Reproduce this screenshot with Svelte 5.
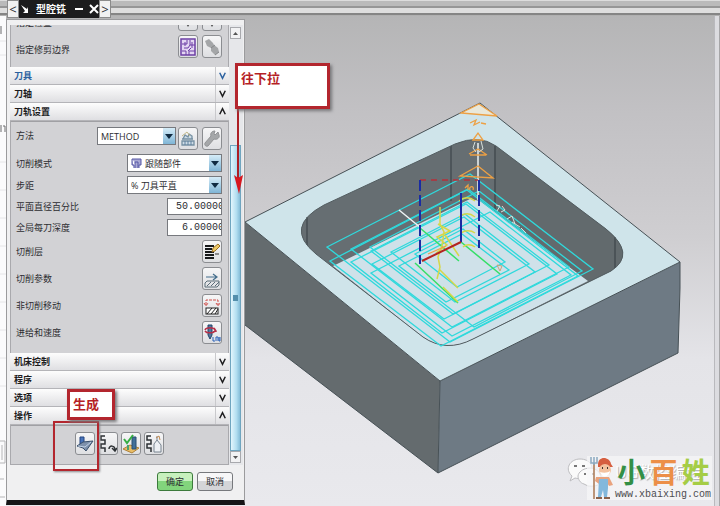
<script lang="ts">
	let metodo = 'METHOD';
	let modo = '跟随部件';
	let paso = '% 刀具平直';
	let porcentaje = '50.00000';
	let profundidad = '6.00000';

	const secciones = ['机床控制', '程序', '选项'];

	const filas = [
		{ texto: '切削层', icono: 'capas' },
		{ texto: '切削参数', icono: 'parametros' },
		{ texto: '非切削移动', icono: 'movimiento' },
		{ texto: '进给和速度', icono: 'velocidad' }
	];

	const acciones = [
		{ texto: '生成', icono: 'generar' },
		{ texto: '重播', icono: 'repetir' },
		{ texto: '确认', icono: 'verificar' },
		{ texto: '列表', icono: 'lista' }
	];

	// u0, v0, u1, v1 on the pocket floor, and the depth of the pass
	const pasadas = [
		[0, 0, 1, 1, 0],
		[0.09, 0.09, 0.91, 0.91, 0],
		[0.165, 0.165, 0.835, 0.835, 0],
		[0.24, 0.24, 0.76, 0.76, 0],
		[0.33, 0.33, 0.67, 0.67, 0],
		[0.02, 0, 0.98, 0.9, 15],
		[0.1, 0.08, 0.9, 0.82, 15],
		[0.18, 0.16, 0.82, 0.74, 15],
		[0.28, 0.26, 0.72, 0.64, 15],
		[0.2, 0.12, 0.96, 0.96, 3],
		[0.05, 0.3, 0.88, 0.96, 1]
	];

	function proyectar(u: number, v: number, z: number) {
		return `${Math.round(327 + u * 143 + v * 123)},${Math.round(247 - u * 73 + v * 95 + z)}`;
	}

	const trayectorias = pasadas.map(([u0, v0, u1, v1, z]) =>
		[proyectar(u0, v0, z), proyectar(u1, v0, z), proyectar(u1, v1, z), proyectar(u0, v1, z)].join(' ')
	);
</script>

{#snippet icono(nombre: string)}
	<svg width="18" height="20" viewBox="0 0 18 20" fill="none" aria-hidden="true">
		{#if nombre === 'borde'}
			<rect x="2" y="2" width="14" height="16" fill="#e3d6f2" stroke="#6c3fa5" stroke-width="1.5" />
			<path d="M3 7h5V3M11 3v5h5M3 14h4v4M10 18v-4h6M5 11h4l2-3M12 11l-3 3M6 5v4M13 5v6" stroke="#6c3fa5" />
		{:else if nombre === 'linterna'}
			<path d="M2 4l4-2 4 4 1 2 4 3 1 4-4 3-4-4v-3L4 9z" fill="#a4a6a8" />
			<path d="M8 11l4-3M12 18l4-3" stroke="#858789" />
		{:else if nombre === 'punto'}
			<path d="M6 12h6l-3 5z" fill="#555" />
		{:else if nombre === 'metodo'}
			<path d="M3 16h12v-4H3zM3 10h11M4 10l2-4 3 2 1-3 3 2v3" fill="#cddbe5" stroke="#7590a2" stroke-width="1.3" />
			<path d="M6 12v4M9 12v4M12 12v4" stroke="#6182a0" />
			<path d="M3 7l5-4 3 4" stroke="#c3b888" />
		{:else if nombre === 'llave'}
			<path d="M15 3l-3 3-1-1 1-3c-3 0-5 2-4 5l-6 7c-1 2 1 4 3 3l6-7c3 1 6-1 5-4z" fill="#a5a7a9" stroke="#929496" />
		{:else if nombre === 'capas'}
			<path d="M2 4h9M2 7h7M2 10h9M2 13h9M2 16h9" stroke="#17191b" stroke-width="2" />
			<path d="M9 10l1-4 5-4 2 2-5 5z" fill="#edca68" stroke="#9c7024" />
			<path d="M12 12h4" stroke="#333" />
		{:else if nombre === 'parametros'}
			<path d="M3 8h10M10 5l4 3-4 3" stroke="#456f8d" stroke-width="1.2" />
			<path d="M2 18v-4l2-2h12v4l-2 2zM4 17l4-4M8 17l4-4M12 17l4-4" stroke="#5c6e79" />
		{:else if nombre === 'movimiento'}
			<path d="M3 9V4h12v5M1 7l2 3 2-3M13 7l2 3 2-3" stroke="#d0504d" stroke-dasharray="3 1" />
			<rect x="3" y="12" width="12" height="6" fill="#fff" stroke="#222" />
			<path d="M4 18l5-6M8 18l5-6M12 18l3-5" stroke="#222" />
		{:else if nombre === 'velocidad'}
			<path d="M5 2h4v10l-2 4-2-4z" fill="#53769c" stroke="#234468" />
			<path d="M2 7c1-3 9-3 10 0s-8 4-10 1M11 5l2 3-3 1" stroke="#b63048" stroke-width="1.5" />
			<path d="M10 14v4h2M13 18v-4h2v4M16 14v4h1v-4" stroke="#2961b8" />
		{:else if nombre === 'generar'}
			<path d="M4 3h4v9H4z" fill="#4974ba" stroke="#244580" />
			<path d="M1 12l6-4 10-1-7 10-3-3z" fill="#7e91ac" stroke="#3b506b" />
			<path d="M2 12l7 1 6-5" stroke="#c0d0e4" />
		{:else if nombre === 'repetir'}
			<path d="M6 2H2v4h4v4H2v4h4v4M10 15c0-4 6-4 6 1M13 14l3 3 2-3" stroke="#2d3134" stroke-width="1.5" />
		{:else if nombre === 'verificar'}
			<path d="M1 15l7-4 9 3-7 5z" fill="#e9bd66" stroke="#ae8039" />
			<path d="M10 3h4v12h-4z" fill="#426f98" stroke="#294e72" />
			<path d="M2 5l3 4 6-8" stroke="#35ad43" stroke-width="2" />
			<path d="M6 11v5" stroke="#49a16f" stroke-width="2" />
		{:else if nombre === 'lista'}
			<path d="M6 2H2v4h4v4H2v4h4v4" stroke="#2d3134" stroke-width="1.5" />
			<path d="M9 10l3-4 4 5v7H9zM12 6V2" fill="#edf0f4" stroke="#788490" />
			<path d="M11 4l3-2 1 4" stroke="#c28a4f" />
		{/if}
	</svg>
{/snippet}

{#snippet cabecera(texto: string, abierta: boolean, activa: boolean)}
	<button class="cabecera" class:activa aria-expanded={abierta}>
		<span>{texto}</span>
		<svg width="14" height="10" viewBox="0 0 14 10" fill="none" aria-hidden="true">
			<path d={abierta ? 'M4 8L7 2L10 8' : 'M4 2L7 8L10 2'} stroke="currentColor" stroke-width="1.6" />
		</svg>
	</button>
{/snippet}

{#snippet flecha()}
	<svg class="flecha" viewBox="0 0 12 16" aria-hidden="true"><path d="M2 6h8l-4 5z" fill="#102b42" /></svg>
{/snippet}

<div class="escritorio">
	<div class="barra"></div>
	<div class="trabajo">
		<svg class="regla" width="6" height="490" viewBox="0 16 6 490" fill="none" aria-hidden="true">
			<path d="M0 41h6M0 55h6M0 162h6M0 190h6M0 218h6M0 246h6M0 274h6M0 302h6M0 330h6M0 358h6M0 386h6" stroke="#e6e6e8" />
			<path d="M1 26v8M1 125v7M3 126h2v6" stroke="#6b6b6d" />
			<path d="M0 441h5v22H0M2 445v15M0 479h4M0 497h5" stroke="#b5b5b7" />
		</svg>
		<div class="vista">
			<svg class="modelo" viewBox="6 16 714 490" fill="none" role="img" aria-label="型腔铣">
				<path d="M245 222L440 381L438 473L245 325z" fill="#646b6e" />
				<path d="M440 381L680 262V288L678 353L438 473z" fill="#6e7a84" />
				<path d="M245 222L480 103L680 262L440 381z" fill="#cfe4ea" />
				<path d="M245 222L480 103L680 262V288L678 353L438 473L440 381M245 222L440 381L680 262M245 325L438 473" stroke="#475156" />
				<path
					d="M324 205L455 144Q479 134 496 146L606 229Q637 254 611 271L473 339Q446 353 423 337L316 254Q283 227 324 205z"
					fill="#666e72"
				/>
				<path d="M494 145L606 229Q637 254 611 271L588 282L494 211z" fill="#626a6d" />
				<path d="M333 266L470 199L480 201L588 281L473 339Q446 353 423 337z" fill="#cfe1e9" />
				<path d="M307 217v28M451 146v55M495 146v66M615 237v31" stroke="#343d42" />
				<path
					d="M324 205L455 144Q479 134 496 146L606 229Q637 254 611 271L473 339Q446 353 423 337L316 254Q283 227 324 205z"
					stroke="#535d61"
				/>

				<g stroke="#2fd9dc" stroke-width="1.3">
					{#each trayectorias as puntos}
						<polygon points={puntos} />
					{/each}
				</g>

				<path d="M399 210l22 18M478 143v57" stroke="#eef3f4" stroke-width="1.5" />
				<path d="M420 228L459 261M461 242L500 274M415 263L458 303" stroke="#35df67" stroke-width="1.5" />
				<path
					d="M440 207v17l4 8-2 14-4 11 2 10-3 12M445 235l14 21M439 269l19 19M443 287l15 15M459 201c5-4 11-4 16 0M459 217c5-4 11-4 16 0M461 233c4-3 10-3 14 0M463 247c3-3 8-3 12 0M438 224l12 7-13 6 10 8-11 8"
					stroke="#d6d747"
					stroke-width="1.5"
				/>
				<g stroke="#eda044" stroke-width="1.3">
					<path d="M461 113L479 104L497 116z" fill="#e9e8da" />
					<path d="M470 123l6-3-2 5 6-3M481 123l5 1M473 140l5-7 5 7zM469 154l9-5 9 6M470 155h16" />
					<path d="M460 176L478 166L493 178zM465 188l3-3v5M470 190c-2-4 5-5 3 0M428 254l18-8" />
				</g>
				<path d="M475 142l-2 6 3 4M481 141l2 8-4 3M496 205l4 1-3 5M502 206l3 4-4 2M507 219l5-3 3 8M512 222l8 5M521 228l5 5" stroke="#d8e0dc" />
				<path d="M497 265l5 1-2 5z" stroke="#cda179" />
				<path d="M420 180h58" stroke="#b72f3a" stroke-width="1.5" stroke-dasharray="6 5" />
				<path d="M420 180v84M479 180v68" stroke="#1a2ca3" stroke-width="2" stroke-dasharray="11 4" />
				<path d="M461 193v49" stroke="#1a2ca3" stroke-width="2" />
				<path d="M422 261l39-19" stroke="#b32520" stroke-width="2" />
			</svg>
		</div>
	</div>

	<section class="dialogo" aria-label="型腔铣">
		<header class="titulo">
			<button aria-label="上一个">&lt;</button>
			<div class="nombre">
				<svg width="12" height="12" viewBox="0 0 12 12" aria-hidden="true"><path d="M2 2l6 4 1-2v6H4l2-2z" fill="#fff" /></svg>
				<h1>型腔铣</h1>
				<button aria-label="最小化"><svg width="10" height="12" viewBox="0 0 10 12"><path d="M1 5h8v2H1z" fill="#fff" /></svg></button>
				<button aria-label="关闭"><svg width="10" height="12" viewBox="0 0 10 12"><path d="M1 2l8 8M9 2l-8 8" stroke="#fff" stroke-width="2" /></svg></button>
			</div>
			<button aria-label="下一个">&gt;</button>
		</header>

		<div class="cuerpo">
			<div class="contenido">
				<div class="panel">
					<div class="grupo cortado">
						<div class="fila baja">
							<span>指定检查</span>
							<button class="icono" aria-label="选择检查">{@render icono('punto')}</button>
							<button class="icono" aria-label="显示检查">{@render icono('punto')}</button>
						</div>
						<div class="fila baja">
							<span>指定修剪边界</span>
							<button class="icono" aria-label="选择边界">{@render icono('borde')}</button>
							<button class="icono" aria-label="显示边界">{@render icono('linterna')}</button>
						</div>
					</div>
					{@render cabecera('刀具', false, true)}
					{@render cabecera('刀轴', false, false)}
					{@render cabecera('刀轨设置', true, false)}

					<div class="grupo ajustes">
						<div class="fila alta">
							<label for="metodo">方法</label>
							<div class="lista metodo">
								<select id="metodo" bind:value={metodo}><option>METHOD</option></select>
								{@render flecha()}
							</div>
							<button class="icono" aria-label="编辑方法">{@render icono('metodo')}</button>
							<button class="icono" aria-label="工具">{@render icono('llave')}</button>
						</div>
						<div class="fila">
							<label for="modo">切削模式</label>
							<div class="lista">
								<svg class="patron" width="11" height="12" viewBox="0 0 11 12" fill="none" aria-hidden="true">
									<path d="M1 2h9v6H8v3M1 2v6h2v3M4 11V5h3v6" fill="#aaa9d4" stroke="#5557a5" />
								</svg>
								<select id="modo" bind:value={modo}><option>跟随部件</option></select>
								{@render flecha()}
							</div>
						</div>
						<div class="fila">
							<label for="paso">步距</label>
							<div class="lista">
								<select id="paso" bind:value={paso}><option>% 刀具平直</option></select>
								{@render flecha()}
							</div>
						</div>
						<div class="fila">
							<label for="porcentaje">平面直径百分比</label>
							<div class="campo"><input id="porcentaje" bind:value={porcentaje} /></div>
						</div>
						<div class="fila">
							<label for="profundidad">全局每刀深度</label>
							<div class="campo"><input id="profundidad" bind:value={profundidad} /></div>
						</div>
						{#each filas as fila}
							<div class="fila">
								<span>{fila.texto}</span>
								<button class="icono" aria-label={fila.texto}>{@render icono(fila.icono)}</button>
							</div>
						{/each}
					</div>

					{#each secciones as seccion}
						{@render cabecera(seccion, false, false)}
					{/each}
					{@render cabecera('操作', true, false)}
					<div class="grupo acciones">
						{#each acciones as accion}
							<button class="icono" aria-label={accion.texto}>{@render icono(accion.icono)}</button>
						{/each}
					</div>
				</div>

				<div class="desplazar">
					<button aria-label="向上"><svg width="7" height="5" viewBox="0 0 7 5"><path d="M1 4h5L3.5 1z" fill="#555" /></svg></button>
					<div class="carril"><div class="pulgar"><i></i></div></div>
					<button aria-label="向下"><svg width="7" height="5" viewBox="0 0 7 5"><path d="M1 1h5L3.5 4z" fill="#555" /></svg></button>
				</div>
			</div>

			<footer>
				<button class="aceptar">确定</button>
				<button>取消</button>
			</footer>
		</div>

		<svg class="puntero" width="12" height="88" viewBox="0 0 12 88" aria-hidden="true">
			<path d="M5 0v74" stroke="#ad2026" stroke-width="2" />
			<path d="M1 68l4 3 5-3-4 19z" fill="#d71920" />
		</svg>
		<div class="nota bajar">往下拉</div>
		<div class="marco"></div>
		<div class="nota generar">生成</div>
	</section>

	<svg class="burbujas" width="36" height="34" viewBox="0 0 36 34" aria-hidden="true">
		<path d="M4 24l2-5C-2 12 4 2 14 2s15 8 10 14-12 6-15 5z" fill="#fafafa" stroke="#bdbdc0" />
		<path d="M12 19c1-8 17-12 22-2s-3 13-12 12l-4-2c-4-1-6-5-6-8z" fill="#fafafa" stroke="#bdbdc0" />
		<path d="M8 9h3M16 9h3M18 17h2M26 17h2" stroke="#777" stroke-width="2" />
	</svg>
	<div class="marca">
		<svg width="28" height="44" viewBox="0 0 28 44" fill="none" aria-hidden="true">
			<path d="M7 7v36" stroke="#a87650" stroke-width="1.5" />
			<path d="M4 1v6h6V1M7 1v8" stroke="#8ba9c0" stroke-width="1.5" />
			<path d="M11 9c0-10 12-8 13-1l2 3H11z" fill="#d65f40" />
			<circle cx="18" cy="14" r="6" fill="#f3c29f" />
			<path d="M13 16c3 1 8 1 10-1 0 6-8 8-10 1z" fill="#fff" />
			<path d="M15 12h1M20 12h1" stroke="#3b332e" stroke-width="2" />
			<path d="M9 21h13l4 8-4 1-3-5-3 6-8-6z" fill="#e9a37e" />
			<path d="M12 23h9v9l-1 9h-3l-1-7-2 7h-3z" fill="#82b8dc" />
			<path d="M9 42h6M17 42h6" stroke="#8b634c" stroke-width="2" />
		</svg>
		<div class="letras">
			<span class="sombra">UG数控编程</span>
			<strong><span class="verde">小</span><span class="naranja">百</span><span class="lima">姓</span></strong>
			<a href="http://www.xbaixing.com">www.xbaixing.com</a>
		</div>
	</div>
</div>

<style>
	:global(body) {
		margin: 0;
		font-family: 'Open Sans', 'Noto Sans CJK SC', sans-serif;
		font-size: 9px;
		color: #2c2d31;
	}

	* {
		box-sizing: border-box;
	}

	button,
	select,
	input {
		font: inherit;
		color: inherit;
		margin: 0;
		padding: 0;
	}

	svg {
		display: block;
		flex: none;
	}

	.escritorio {
		position: relative;
		display: flex;
		flex-direction: column;
		min-height: 100vh;
		overflow: hidden;
	}

	.barra {
		height: 16px;
		background: linear-gradient(#dcdcdc 1px, #bababa 1px 6px, #969696 6px 8px, #dedede 8px 13px, #858585 13px 15px, #b0b0b0 15px);
	}

	.trabajo {
		display: flex;
		flex: 1;
	}

	.regla {
		background: #fbfbfc;
	}

	.vista {
		flex: 1;
		background: linear-gradient(#b5b5b6, #c2c1c4 20%, #cfced1 45%, #e4e4e8 70%, #e9e9ed);
		box-shadow: inset -1px 0 #a6a6a8, inset -5px 0 #dcdce0, inset -6px 0 #b9b9bd;
	}

	.modelo {
		width: 100%;
		height: auto;
	}

	.dialogo {
		position: absolute;
		left: 6px;
		top: 0;
		width: 239px;
	}

	.titulo {
		display: flex;
		height: 19px;
		padding-left: 1px;
	}

	.titulo > button {
		width: 12px;
		height: 18px;
		border: 1px solid #8b8b8b;
		background: #f1f1f1;
		font-size: 13px;
		line-height: 14px;
	}

	.nombre {
		display: flex;
		align-items: center;
		gap: 5px;
		width: 80px;
		height: 18px;
		background: #1c1c1d;
		color: #fff;
	}

	.nombre button {
		border: 0;
		background: none;
	}

	h1 {
		flex: 1;
		margin: 0;
		font-size: 10px;
		font-weight: bold;
		line-height: 18px;
		white-space: nowrap;
	}

	.cuerpo {
		border: 1px solid #9b9b9d;
		border-bottom: 5px solid #151517;
		background: #f0f0f1;
		padding: 5px 1px 0 3px;
	}

	.contenido {
		display: flex;
	}

	.panel {
		flex: 1;
	}

	.grupo {
		display: flex;
		flex-direction: column;
		gap: 4px;
		padding: 6px 6px 9px 5px;
		border: 1px solid #a9a9ad;
		border-width: 0 1px 0 1px;
		background: #d2d2d5;
	}

	.cortado {
		height: 42px;
		padding-top: 0;
		justify-content: flex-end;
		overflow: hidden;
	}

	.ajustes {
		box-shadow: inset 0 1px #a0a0a4;
	}

	.fila {
		display: flex;
		align-items: center;
		gap: 4px;
		line-height: 17px;
		flex: none;
	}

	.fila > :first-child {
		flex: 1;
		white-space: nowrap;
	}

	.baja {
		align-items: flex-end;
	}

	.alta {
		align-items: flex-start;
	}

	.icono {
		width: 20px;
		height: 23px;
		border: 1px solid #8b8d91;
		border-radius: 3px;
		background: linear-gradient(#f6f6f7, #dedfe2);
		overflow: hidden;
	}

	.cabecera {
		display: flex;
		align-items: center;
		justify-content: space-between;
		width: 100%;
		height: 18px;
		padding: 0 0 0 4px;
		border: 0;
		border-bottom: 1px solid #b4b4b8;
		background: linear-gradient(#fdfdfd, #dfdfe2);
		color: #1c1c1e;
		font-weight: bold;
		line-height: 17px;
	}

	.cabecera svg {
		height: 17px;
		border-left: 1px solid #c9c9cc;
	}

	.activa {
		color: #2b619f;
	}

	.lista {
		display: flex;
		align-items: center;
		position: relative;
		width: 95px;
		height: 18px;
		border: 1px solid #77797e;
		background: #fff;
	}

	.metodo {
		width: 79px;
		margin-right: -2px;
	}

	.lista select {
		flex: 1;
		min-width: 0;
		height: 16px;
		padding-left: 3px;
		border: 0;
		background: none;
		appearance: none;
	}

	.patron {
		margin-left: 3px;
	}

	.flecha {
		position: absolute;
		right: 0;
		top: 0;
		width: 12px;
		height: 16px;
		background: linear-gradient(#d5ecf8, #7fb5d6);
		pointer-events: none;
	}

	.campo {
		width: 55px;
		height: 17px;
		border: 1px solid #77797e;
		background: #fff;
		overflow: hidden;
	}

	.campo input {
		display: block;
		width: 56px;
		height: 15px;
		border: 0;
		background: none;
		font-family: 'Liberation Mono', monospace;
		font-size: 10px;
		text-align: right;
	}

	.acciones {
		flex-direction: row;
		justify-content: center;
		gap: 3px;
		padding: 7px 0 9px;
		box-shadow: inset 0 1px #a0a0a4;
		border-bottom-width: 1px;
	}

	.desplazar {
		display: flex;
		flex-direction: column;
		width: 14px;
		padding: 2px 2px 2px 1px;
		background: #e6e7ea;
	}

	.desplazar button {
		display: grid;
		place-items: center;
		height: 12px;
		border: 1px solid #a8a9ad;
		background: #f2f2f3;
	}

	.carril {
		display: flex;
		flex: 1;
		padding-top: 106px;
	}

	.pulgar {
		display: grid;
		place-items: center;
		flex: 1;
		border: 1px solid #6fa5bf;
		background: linear-gradient(90deg, #e3f6fd, #b3def0 60%, #85bdd8);
	}

	.pulgar i {
		width: 5px;
		height: 6px;
		background: #548fac;
	}

	footer {
		display: flex;
		justify-content: flex-end;
		gap: 4px;
		padding: 7px 10px 9px 0;
	}

	footer button {
		width: 36px;
		height: 19px;
		border: 1px solid #77797d;
		border-radius: 3px;
		background: linear-gradient(#f7f7f8 50%, #d4d5d8 50%);
		line-height: 17px;
	}

	footer .aceptar {
		border-color: #3c7a3c;
		background: linear-gradient(#c7f1bd 50%, #82d47c 50%);
	}

	.nota {
		position: absolute;
		border: 3px solid #b3262e;
		background: #fff;
		box-shadow: 2px 2px 3px #77777a;
		color: #b51f25;
		font-size: 13px;
		font-weight: bold;
	}

	.bajar {
		left: 229px;
		top: 63px;
		width: 95px;
		height: 46px;
		padding-left: 3px;
		line-height: 24px;
	}

	.generar {
		left: 61px;
		top: 389px;
		width: 48px;
		height: 31px;
		padding-left: 3px;
		line-height: 25px;
	}

	.marco {
		position: absolute;
		left: 47px;
		top: 421px;
		width: 46px;
		height: 50px;
		border: 2px solid #b3262e;
		box-shadow: 1px 1px 2px #88888b;
	}

	.puntero {
		position: absolute;
		left: 227px;
		top: 107px;
	}

	.burbujas {
		position: absolute;
		right: 118px;
		bottom: 15px;
	}

	.marca {
		position: absolute;
		right: 8px;
		bottom: 6px;
		display: flex;
		background: rgba(246, 246, 248, 0.7);
	}

	.letras {
		position: relative;
		display: flex;
		flex-direction: column;
		width: 97px;
	}

	.letras strong {
		position: relative;
		display: flex;
		justify-content: space-around;
		height: 33px;
		font-size: 28px;
		line-height: 33px;
	}

	.sombra {
		position: absolute;
		left: 0;
		top: 6px;
		color: #fff;
		font-size: 16px;
		line-height: 20px;
		text-shadow: 1px 1px 1px #aaa;
		white-space: nowrap;
	}

	.verde {
		color: #338f45;
	}

	.naranja {
		color: #ec8f48;
	}

	.lima {
		color: #a5cd46;
	}

	.letras a {
		color: #4d4d50;
		font-family: 'Liberation Mono', monospace;
		font-size: 10px;
		line-height: 11px;
		text-decoration: none;
	}
</style>
